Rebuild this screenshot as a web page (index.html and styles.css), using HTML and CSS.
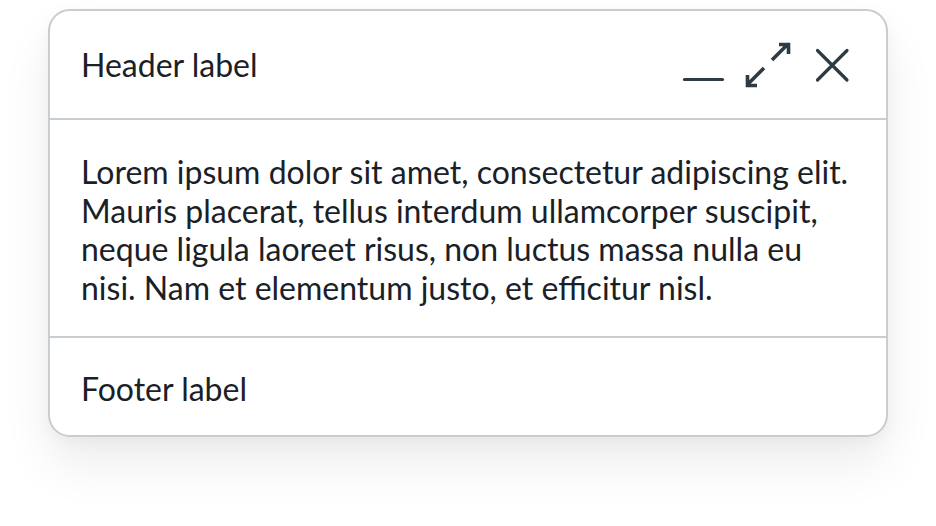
FILE: index.html
```html
<!DOCTYPE html>
<html>
<head>
<meta charset="utf-8">
<link rel="stylesheet" href="styles.css">
</head>
<body>
<div class="card">
  <div class="header">
    <div class="title">Header label</div>
    <div class="actions">
      <svg class="ic ic-min" width="44" height="48" viewBox="0 0 44 48"><path d="M2.5 38.5H40.5"/></svg>
      <svg class="ic ic-exp" width="54" height="48" viewBox="0 0 54 48"><path d="M30 19L45 4M37 3.5H46.5V13M22 27L6 43M5.5 34V44.5H15"/></svg>
      <svg class="ic ic-close" width="40" height="48" viewBox="0 0 40 48"><path d="M5.5 9.5L35 39M35 9.5L5.5 39"/></svg>
    </div>
  </div>
  <div class="body">Lorem ipsum dolor sit amet, consectetur adipiscing elit. Mauris placerat, tellus interdum ullamcorper suscipit, neque ligula laoreet risus, non luctus massa nulla eu nisi. Nam et elementum justo, et efficitur nisl.</div>
  <div class="footer">Footer label</div>
</div>
</body>
</html>
```
FILE: styles.css
```css
html, body {
  margin: 0;
  padding: 0;
  background: #ffffff;
}
body {
  width: 936px;
  height: 526px;
  overflow: hidden;
  font-family: Lato, "Open Sans", sans-serif;
  color: #1a2126;
}
.card {
  box-sizing: border-box;
  width: 840px;
  height: 428px;
  margin: 9px 0 0 48px;
  border: 2px solid #c7cdd1;
  border-radius: 22px;
  background: #fff;
  display: flex;
  flex-direction: column;
  box-shadow: 0 28px 50px rgba(0, 0, 0, 0.07), 0 6px 16px rgba(0, 0, 0, 0.04);
}
.header {
  height: 107px;
  flex: none;
  display: flex;
  align-items: center;
  padding: 0 34px 0 31px;
  border-bottom: 2px solid #c7cdd1;
}
.title {
  font-size: 32px;
  line-height: 38px;
  padding-top: 1px;
}
.actions {
  margin-left: auto;
  display: flex;
  gap: 16px;
  align-items: center;
}
.ic {
  display: block;
  fill: none;
  stroke: #2d3b45;
  stroke-width: 3.2;
}
.ic-min path { stroke-linecap: round; }
.ic-exp path { stroke-width: 3.6; stroke-linejoin: miter; }
.ic-close path { stroke-linecap: round; }
.body {
  height: 218px;
  flex: none;
  box-sizing: border-box;
  padding: 33px 31px 29px;
  font-size: 32px;
  line-height: 38.6px;
  border-bottom: 2px solid #c7cdd1;
}
.footer {
  flex: 1;
  display: flex;
  align-items: center;
  padding: 3px 31px 0;
  font-size: 32px;
}
```
